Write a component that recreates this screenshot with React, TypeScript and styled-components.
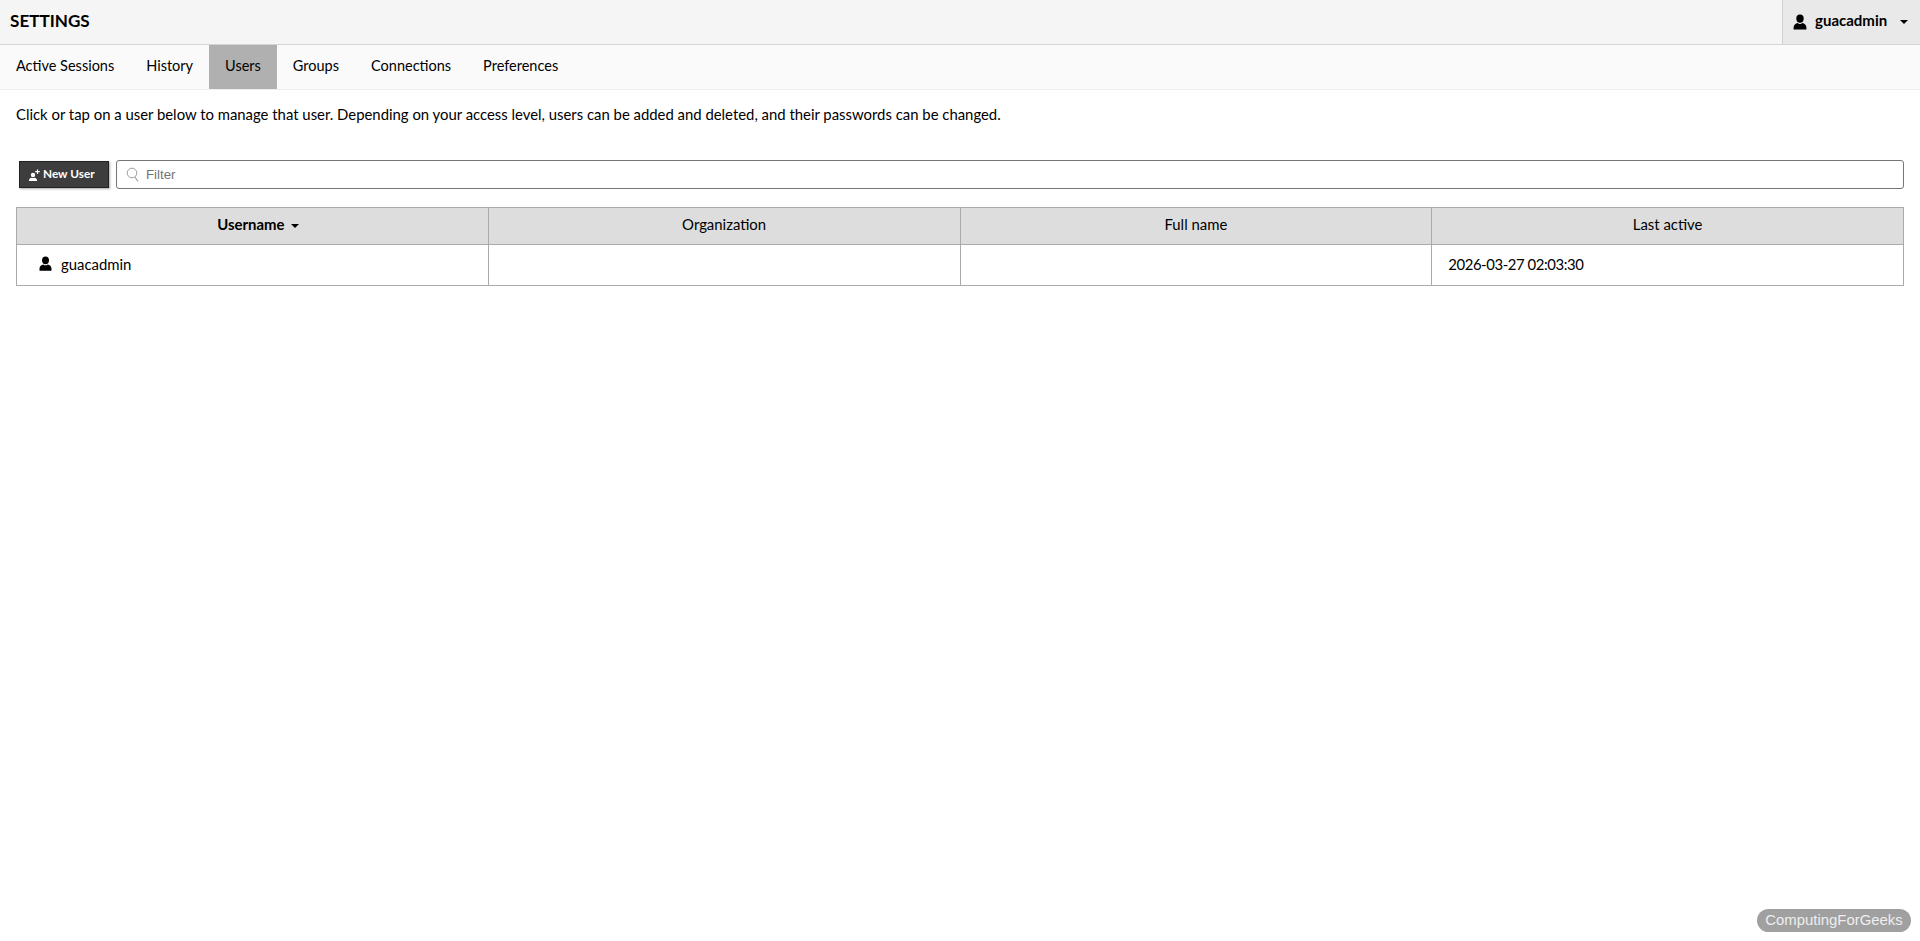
import React from "react";
import styled, { createGlobalStyle } from "styled-components";

const Global = createGlobalStyle`
  html, body { margin: 0; padding: 0; background: #fff; }
  body { font-family: Lato, "Liberation Sans", sans-serif; font-size: 14.9px; color: #000; height: 941px; overflow: hidden; position: relative; }
`;

const Header = styled.header`
  display: flex; justify-content: space-between; align-items: stretch;
  height: 44px; background: #f5f5f5; border-bottom: 1px solid #d4d4d4; box-shadow: 0 1px 2px rgba(0,0,0,.06);
`;
const Title = styled.h1`
  margin: 0; padding-left: 10px; align-self: center; font-size: 17.1px; font-weight: 700; line-height: 42px; margin-top: -3px;
`;
const UserMenu = styled.div`
  width: 138px; box-sizing: border-box; display: flex; align-items: center; padding-left: 9px;
  background: #e9e9e9; border-left: 1px solid #d0d0d0; font-weight: 700; font-size: 15px;
`;
const MenuName = styled.span` margin-left: 7px; margin-top: -4px; `;
const Caret = styled.i`
  display: inline-block; width: 0; height: 0; border-left: 4px solid transparent; border-right: 4px solid transparent; border-top: 4px solid #000;
`;
const MenuCaret = styled(Caret)` margin-left: 13px; margin-top: -1px; `;
const Nav = styled.nav`
  display: flex; height: 44px; background: #fafafa; border-bottom: 1px solid #eee;
`;
const Tab = styled.a<{ $active?: boolean }>`
  display: flex; align-items: center; padding: 0 16px 4px; font-size: 14.5px; color: #000;
  background: ${(p) => (p.$active ? "#b0b0b0" : "transparent")};
`;
const Intro = styled.p`
  margin: 0; padding: 15px 16px 0; font-size: 14.88px; line-height: 19px;
`;
const Toolbar = styled.div`
  display: flex; align-items: center; gap: 7px; margin: 36px 16px 0 19px; height: 29px;
`;
const NewUser = styled.button`
  display: flex; align-items: center; width: 90px; height: 27px; box-sizing: border-box; padding: 0 0 0 8px;
  background: #3d3d3d; border: 1px solid #222; color: #fff; font: 700 11.8px Lato, sans-serif;
  box-shadow: 1px 1px 2px rgba(0,0,0,.35);
`;
const ButtonLabel = styled.span` margin-left: 2px; margin-top: -2px; `;
const Filter = styled.div`
  flex: 1; height: 29px; box-sizing: border-box; display: flex; align-items: center; padding-left: 9px;
  border: 1px solid #777; border-radius: 3px; box-shadow: inset 0 0 1px rgba(0,0,0,.1);
`;
const FilterInput = styled.input`
  border: 0; outline: 0; flex: 1; margin-left: 6px; padding: 0; font: 13.3px "Liberation Sans", Arial, sans-serif; background: transparent;
  &::placeholder { color: #757575; opacity: 1; }
`;
const Grid = styled.table`
  display: table; width: 1888px; margin: 18px 0 0 16px; border-collapse: collapse; table-layout: fixed; font-size: 14.9px;
`;
const Head = styled.th<{ $sorted?: boolean }>`
  height: 32px; padding: 0 0 4px ${(p) => (p.$sorted ? "12px" : "0")}; background: #ddd; border: 1px solid #aaa; text-align: center;
  font-weight: ${(p) => (p.$sorted ? 700 : 400)};
`;
const Cell = styled.td`
  height: 41px; padding: 0 0 3px 16px; box-sizing: border-box; border: 1px solid #aaa;
`;
const DateCell = styled(Cell)` letter-spacing: -0.42px; `;
const NameCell = styled(Cell)` padding-left: 21px; `;
const NameWrap = styled.div` display: flex; align-items: center; gap: 8px; `;
const HeadCaret = styled(Caret)` margin-left: 7px; vertical-align: 2px; `;
const Badge = styled.div`
  position: absolute; right: 9px; bottom: 9px; width: 154px; height: 23px; border-radius: 12px;
  background: rgba(128,128,128,.75); color: #eee; font: 14.9px/22px "Liberation Sans", Arial, sans-serif; text-align: center;
`;

const UserIcon = ({ size = 16 }: { size?: number }) => (
  <svg width={size} height={size} viewBox="0 0 16 16" aria-hidden="true">
    <ellipse cx="8" cy="4.6" rx="3.7" ry="4.2" fill="#000" />
    <path d="M1.6 15.6v-2.4c0-2.3 2-3.6 4-4.2.7.6 1.5.9 2.4.9s1.7-.3 2.4-.9c2 .6 4 1.9 4 4.2v2.4z" fill="#000" />
  </svg>
);
const AddUserIcon = () => (
  <svg width="13" height="13" viewBox="0 0 13 13" aria-hidden="true">
    <circle cx="5" cy="7" r="2.2" fill="#fff" />
    <path d="M1 13v-1c0-1.2 1.4-2 2.7-2.3.8.3 1.8.3 2.6 0C7.6 10 9 10.800 9 12v1z" fill="#fff" />
    <path d="M9.500 1.500v4.500M7.200 3.700h4.600" stroke="#fff" strokeWidth="1.2" />
  </svg>
);
const SearchIcon = () => (
  <svg width="14" height="16" viewBox="0 0 14 16" fill="none" stroke="#a0a0a0" aria-hidden="true">
    <circle cx="6" cy="6" r="4.8" strokeWidth="1" />
    <path d="M9 10l3 4.500" strokeWidth="1.2" />
  </svg>
);

export default function App() {
  return (
    <>
      <Global />
      <Header>
        <Title>SETTINGS</Title>
        <UserMenu>
          <UserIcon size={16} />
          <MenuName>guacadmin</MenuName>
          <MenuCaret />
        </UserMenu>
      </Header>
      <Nav>
        <Tab>Active Sessions</Tab>
        <Tab>History</Tab>
        <Tab $active>Users</Tab>
        <Tab>Groups</Tab>
        <Tab>Connections</Tab>
        <Tab>Preferences</Tab>
      </Nav>
      <Intro>Click or tap on a user below to manage that user. Depending on your access level, users can be added and deleted, and their passwords can be changed.</Intro>
      <Toolbar>
        <NewUser>
          <AddUserIcon />
          <ButtonLabel>New User</ButtonLabel>
        </NewUser>
        <Filter>
          <SearchIcon />
          <FilterInput placeholder="Filter" />
        </Filter>
      </Toolbar>
      <Grid>
        <thead>
          <tr>
            <Head $sorted>Username<HeadCaret /></Head>
            <Head>Organization</Head>
            <Head>Full name</Head>
            <Head>Last active</Head>
          </tr>
        </thead>
        <tbody>
          <tr>
            <NameCell>
              <NameWrap>
                <UserIcon size={15} />
                guacadmin
              </NameWrap>
            </NameCell>
            <Cell />
            <Cell />
            <DateCell>2026-03-27 02:03:30</DateCell>
          </tr>
        </tbody>
      </Grid>
      <Badge>ComputingForGeeks</Badge>
    </>
  );
}
